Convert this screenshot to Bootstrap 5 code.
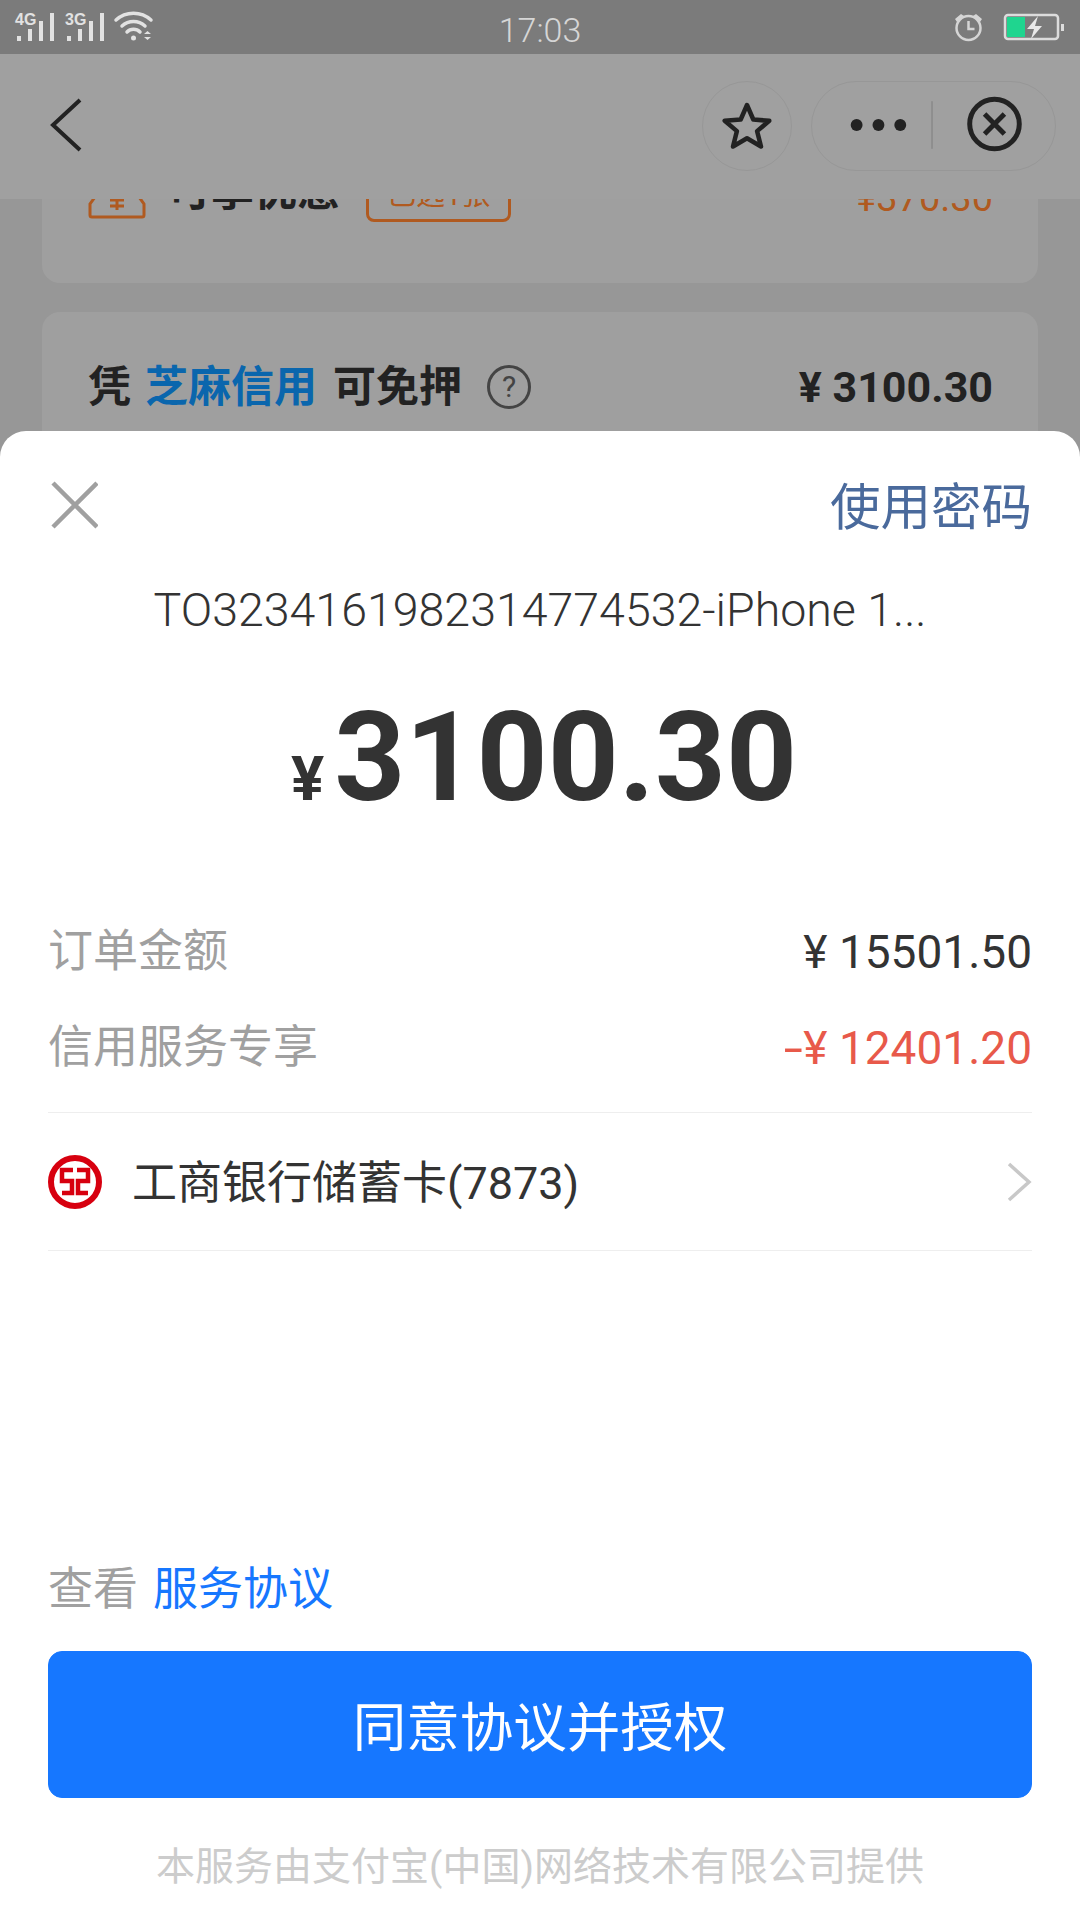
<!DOCTYPE html>
<html lang="zh-CN">
<head>
    <title>Application</title>
    <meta charset="utf-8">
    <meta name="viewport" content="width=device-width, initial-scale=1">
    <link href="https://cdn.jsdelivr.net/npm/bootstrap@5.3.0/dist/css/bootstrap.min.css" rel="stylesheet">
    <style>
        html, body { margin: 0; background: #979797; }
        body { font-family: Roboto, "Noto Sans CJK SC", sans-serif; }
        .phone { width: 1080px; height: 1920px; overflow: hidden; background: #979797; }

        .status-strip { height: 54px; background: #7b7b7b; color: #d6d6d6; flex: none; }
        .status-side { width: 300px; }
        .status-time { font-size: 34px; font-weight: 300; line-height: 60px; width: 480px; text-align: center; }
        .status-svg text { font-family: "Liberation Sans", sans-serif; font-weight: 700; font-size: 16px; fill: #e2e2e2; }

        .top-bar { height: 145px; background: #a0a0a0; flex: none; z-index: 2; padding: 27px 24px 0 50px; }
        .star-btn { width: 90px; height: 90px; border: 1px solid #979797; border-radius: 50%; margin-right: 19px; }
        .capsule { width: 245px; height: 90px; border: 1px solid #979797; border-radius: 45px; }

        .peek { height: 232px; flex: none; overflow: hidden; padding: 0 42px; }
        .peek-card { background: #9f9f9f; border-radius: 18px; padding: 0 45px 0 46px; }
        .peek-coupon { height: 124px; margin-top: -40px; margin-bottom: 29px; padding-top: 7px; }
        .peek-credit { height: 150px; padding-top: 45px; }
        .coupon-name { font-size: 43px; font-weight: 700; color: #222; line-height: 60px; margin: -5px 0 0 22px; }
        .coupon-tag { height: 62px; padding: 0 18px; margin: -6px 0 0 26px; border: 3px solid #b05a20; border-radius: 8px; color: #b05a20; font-size: 29px; line-height: 64px; white-space: nowrap; }
        .coupon-price { font-size: 38px; color: #b05a20; line-height: 60px; margin-top: 2px; }
        .credit-line { font-size: 43px; font-weight: 700; color: #222; line-height: 60px; }
        .credit-blue { color: #0a66ad; margin: 0 16px 0 14px; }
        .credit-help { width: 44px; height: 44px; border: 3px solid #444; border-radius: 50%; font-size: 30px; font-weight: 400; color: #444; line-height: 38px; text-align: center; margin-left: 25px; }
        .credit-price { font-size: 43px; font-weight: 700; color: #222; line-height: 60px; }

        .pay-sheet { flex: 1; background: #fff; border-radius: 26px 26px 0 0; padding: 50px 48px 28px; min-height: 0; }
        .sheet-head { height: 50px; }
        .pwd-link { font-size: 50.500px; line-height: 50px; color: #4a6a9c; padding-top: 4px; }
        .order-title { font-size: 46.500px; font-weight: 300; line-height: 60px; margin-top: 49px; color: #333; text-align: center; white-space: nowrap; }
        .big-amount { height: 140px; margin-top: 48px; margin-bottom: -1px; padding-left: 8px; color: #333; text-align: center; line-height: 140px; }
        .big-yen { font-size: 62px; font-weight: 700; margin-right: 10px; }
        .big-num { font-size: 124px; font-weight: 700; }
        .fee-row { height: 60px; line-height: 62px; font-size: 45px; color: #a0a0a0; }
        .fee-num { color: #333; font-size: 46px; }
        .fee-minus { color: #e8594a; }
        .minus-sign { display: inline-block; transform: scaleX(1.5); margin: 0 4px 0 3px; }
        .first-fee { margin-top: 94px; }
        .next-fee { margin-top: 36px; margin-bottom: 35px; }
        .bank-row { height: 139px; border-top: 1px solid #eee; border-bottom: 1px solid #eee; font-size: 45px; color: #333; }
        .bank-name { margin: 4px 0 0 30px; }
        .agree-line { height: 60px; line-height: 64px; font-size: 45px; color: #a0a0a0; margin-top: auto; }
        .agree-link { color: #1677ff; margin-left: 15px; }
        .agree-btn { height: 147px; margin-top: 33px; padding-top: 16px; border-radius: 14px; background: #1677ff; border-color: #1677ff; font-size: 53.500px; color: #fff; }
        .provider { height: 50px; line-height: 50px; margin-top: 44px; font-size: 39px; color: #ccc; text-align: center; white-space: nowrap; }
    </style>
</head>
<body>
<div class="phone d-flex flex-column">
    <div class="status-strip d-flex justify-content-between">
        <div class="status-side">
            <svg class="status-svg d-block" width="170" height="54" viewBox="0 0 170 54">
                <text x="15" y="25">4G</text>
                <g fill="#e2e2e2">
                    <rect x="17" y="36" width="4" height="5"/><rect x="28" y="29" width="4" height="12"/><rect x="39" y="21" width="4" height="20"/><rect x="50" y="13" width="4" height="28"/>
                </g>
                <text x="65" y="25">3G</text>
                <g fill="#e2e2e2">
                    <rect x="67" y="36" width="4" height="5"/><rect x="78" y="29" width="4" height="12"/><rect x="89" y="21" width="4" height="20"/><rect x="100" y="13" width="4" height="28"/>
                </g>
                <g fill="none" stroke="#e2e2e2" stroke-width="3.500" stroke-linecap="round">
                    <path d="M116 20a26 26 0 0 1 35 0"/><path d="M122 26a17 17 0 0 1 23 0"/><path d="M127 32a9 9 0 0 1 13 0"/>
                </g>
                <circle cx="133.500" cy="38" r="2.500" fill="#e2e2e2"/>
                <path d="M144 34h7l-3.500-3zM144 37h7l-3.500 3z" fill="#e2e2e2"/>
            </svg>
        </div>
        <div class="status-time">17:03</div>
        <div class="status-side d-flex justify-content-end">
            <svg class="d-block" width="130" height="54" viewBox="950 0 130 54">
                <circle cx="968.500" cy="28" r="12" fill="none" stroke="#d5d5d5" stroke-width="2.500"/>
                <path d="M968.500 21v8h6" fill="none" stroke="#d5d5d5" stroke-width="2.500"/>
                <path d="M955 19l6-5 3 2-7 6zM982 19l-6-5-3 2 7 6z" fill="#d5d5d5"/>
                <rect x="1005" y="15" width="53" height="24" rx="3" fill="none" stroke="#dcdcdc" stroke-width="2.500"/>
                <rect x="1007" y="17" width="18" height="20" fill="#1fd58f"/>
                <rect x="1061" y="24" width="3" height="7" fill="#dcdcdc"/>
                <path d="M1038 16l-11 13h7l-3 10 11-13h-7z" fill="#e8e8e8"/>
            </svg>
        </div>
    </div>

    <div class="top-bar d-flex position-relative">
        <svg class="d-block me-auto" width="32" height="88" viewBox="0 0 32 88">
            <path d="M30 19L3 44l27 25" fill="none" stroke="#222" stroke-width="4"/>
        </svg>
        <div class="star-btn d-flex align-items-center justify-content-center">
            <svg width="50" height="50" viewBox="0 0 50 50">
                <path d="M25 4l6.300 14.500 16 1.300-12.200 10.300 3.900 15.400L25 37.300l-14 8.200 3.900-15.400L2.700 19.800l16-1.300z" fill="none" stroke="#222" stroke-width="4.500" stroke-linejoin="round"/>
            </svg>
        </div>
        <div class="capsule d-flex align-items-center">
            <svg class="d-block" width="245" height="88" viewBox="811 83 245 88">
                <circle cx="856" cy="126" r="6" fill="#222"/><circle cx="878" cy="126" r="6" fill="#222"/><circle cx="900" cy="126" r="6" fill="#222"/>
                <rect x="931.500" y="102" width="1" height="48" fill="#7e7e7e"/>
                <circle cx="995" cy="125" r="25" fill="none" stroke="#222" stroke-width="5"/>
                <path d="M985 115l20 20M1005 115l-20 20" fill="none" stroke="#222" stroke-width="5"/>
            </svg>
        </div>
    </div>

    <div class="peek">
        <div class="peek-card peek-coupon d-flex align-items-start">
            <svg class="d-block flex-none" width="58" height="56" viewBox="0 0 58 56">
                <path d="M12 24L2 38v11q0 2 2 2h50q2 0 2-2V38L46 24" fill="none" stroke="#b05a20" stroke-width="3"/>
                <path d="M22 34h14M22 40h14M29 34v10" fill="none" stroke="#b05a20" stroke-width="3"/>
            </svg>
            <div class="coupon-name">可享优惠</div>
            <div class="coupon-tag">已选1张</div>
            <div class="coupon-price ms-auto">¥370.30</div>
        </div>
        <div class="peek-card peek-credit d-flex justify-content-between">
            <div class="credit-line d-flex align-items-center align-self-start">
                凭<span class="credit-blue">芝麻信用</span>可免押<span class="credit-help">?</span>
            </div>
            <div class="credit-price">¥ 3100.30</div>
        </div>
    </div>

    <div class="pay-sheet d-flex flex-column">
        <div class="sheet-head d-flex justify-content-between align-items-center">
            <svg class="d-block" width="50" height="50" viewBox="0 0 50 50">
                <path d="M5 2l44 44M49 2L5 46" fill="none" stroke="#a0a0a0" stroke-width="4.500"/>
            </svg>
            <div class="pwd-link">使用密码</div>
        </div>
        <div class="order-title">TO3234161982314774532-iPhone 1...</div>
        <div class="big-amount"><span class="big-yen">¥</span><span class="big-num">3100.30</span></div>
        <div class="fee-row first-fee d-flex justify-content-between">
            <span>订单金额</span><span class="fee-num">¥ 15501.50</span>
        </div>
        <div class="fee-row next-fee d-flex justify-content-between">
            <span>信用服务专享</span><span class="fee-num fee-minus"><span class="minus-sign">-</span>¥ 12401.20</span>
        </div>
        <div class="bank-row d-flex align-items-center">
            <svg class="d-block" width="54" height="54" viewBox="0 0 54 54">
                <circle cx="27" cy="27" r="24" fill="none" stroke="#d7000f" stroke-width="6"/>
                <path d="M25 15H14v11h10v12H14M29 15h11v11H30v12h10" fill="none" stroke="#d7000f" stroke-width="4.500"/>
            </svg>
            <span class="bank-name">工商银行储蓄卡(7873)</span>
            <svg class="d-block ms-auto" width="26" height="40" viewBox="0 0 26 40">
                <path d="M3 2l20 18L3 38" fill="none" stroke="#c8c8c8" stroke-width="3.500"/>
            </svg>
        </div>
        <div class="agree-line">查看<span class="agree-link">服务协议</span></div>
        <button type="button" class="btn btn-primary agree-btn w-100">同意协议并授权</button>
        <div class="provider">本服务由支付宝(中国)网络技术有限公司提供</div>
    </div>
</div>
<script src="https://cdn.jsdelivr.net/npm/bootstrap@5.3.0/dist/js/bootstrap.bundle.min.js"></script>
</body>
</html>
